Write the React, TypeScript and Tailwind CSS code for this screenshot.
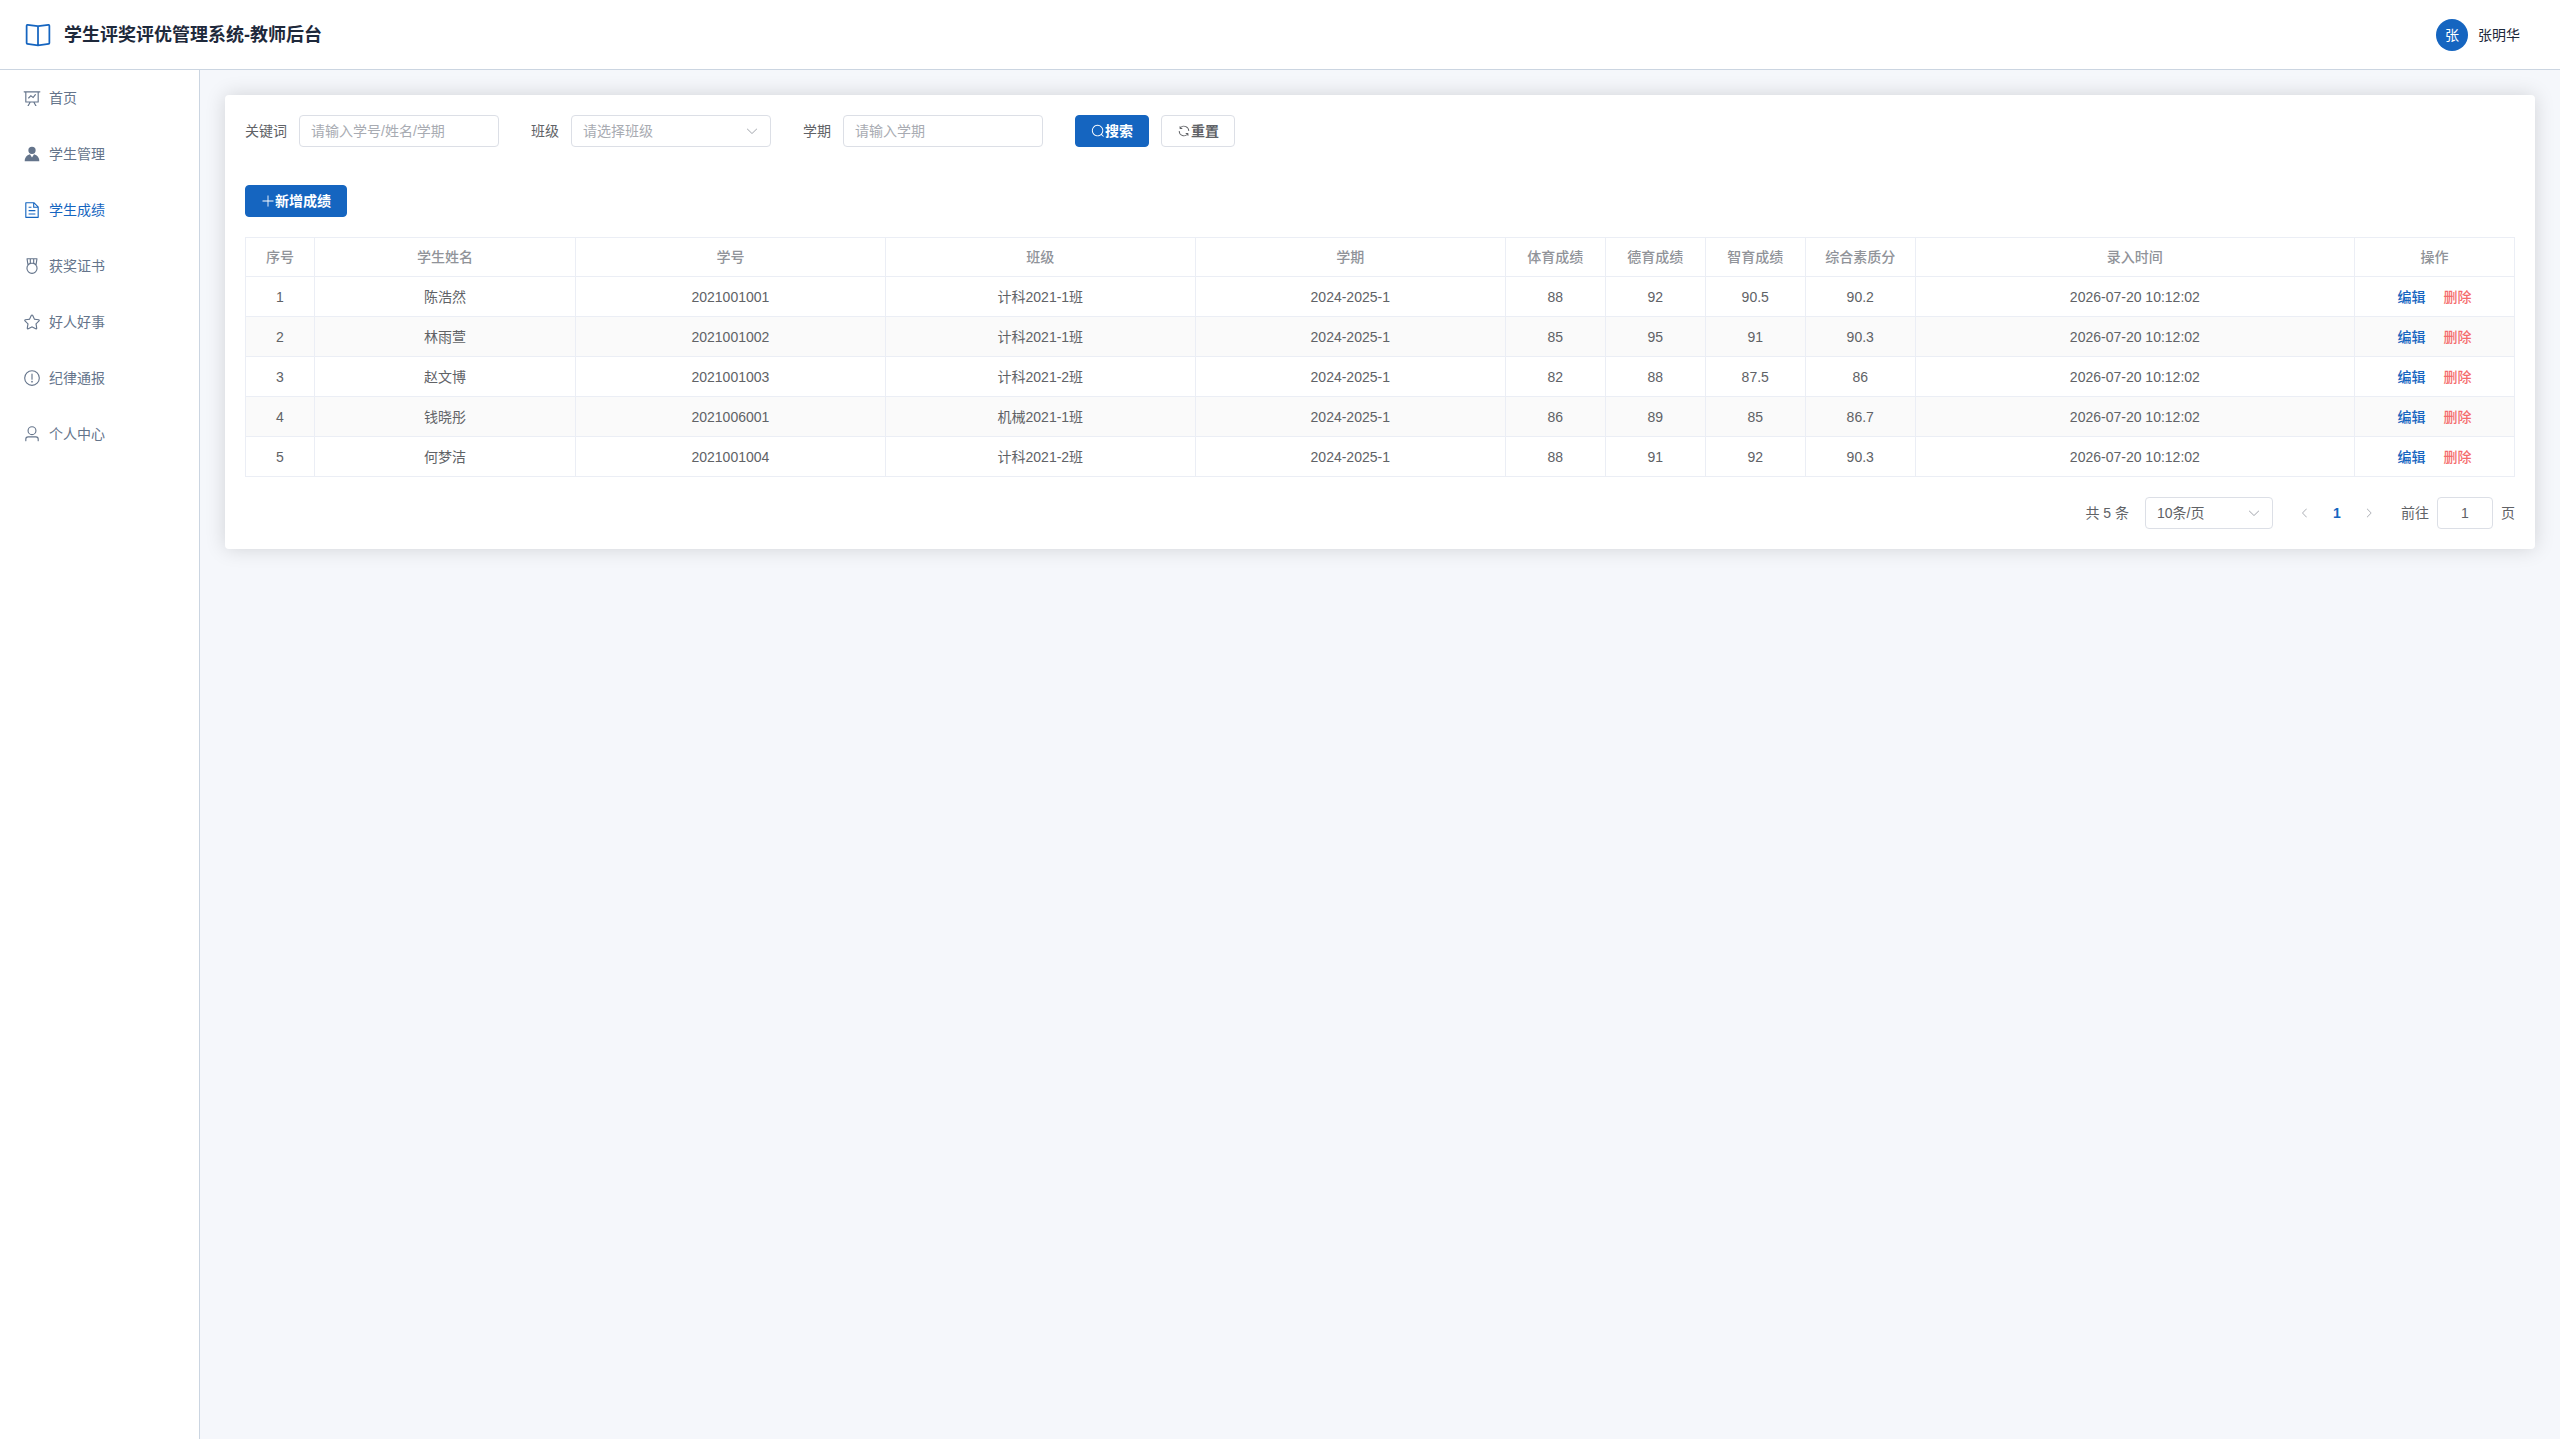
import React, { useState } from 'react';

const ICONS = {
  reading:
    'm512 863.36 384-54.848v-638.72L525.568 222.72a96 96 0 0 1-27.136 0L128 169.792v638.72zM137.024 106.432l370.432 52.928a32 32 0 0 0 9.088 0l370.432-52.928A64 64 0 0 1 960 169.792v638.72a64 64 0 0 1-54.976 63.36l-388.48 55.488a32 32 0 0 1-9.088 0l-388.48-55.488A64 64 0 0 1 64 808.512v-638.72a64 64 0 0 1 73.024-63.36M480 192h64v704h-64z',
  dataLine:
    'M359.168 768H160a32 32 0 0 1-32-32V192H64a32 32 0 0 1 0-64h896a32 32 0 1 1 0 64h-64v544a32 32 0 0 1-32 32H665.216l110.848 192h-73.856L591.36 768H433.024L322.176 960H248.32zM832 192H192v512h640zM342.656 534.656a32 32 0 1 1-45.312-45.312L444.992 341.76l125.44 94.08L679.04 300.032a32 32 0 1 1 49.92 39.936L581.632 524.224 451.008 426.24 342.656 534.592z',
  avatar:
    'M628.736 528.896A416 416 0 0 1 928 928H96a415.872 415.872 0 0 1 299.264-399.104L512 704zM720 304a208 208 0 1 1-416 0 208 208 0 0 1 416 0',
  document:
    'M832 384H576V128H192v768h640zm-26.496-64L640 154.496V320zM160 64h480l256 256v608a32 32 0 0 1-32 32H160a32 32 0 0 1-32-32V96a32 32 0 0 1 32-32m160 448h384v64H320zm0-192h160v64H320zm0 384h384v64H320z',
  medal:
    'M512 896a256 256 0 1 0 0-512 256 256 0 0 0 0 512m0 64a320 320 0 1 1 0-640 320 320 0 0 1 0 640M576 128H448v200a286.72 286.72 0 0 1 64-8c19.52 0 40.832 2.688 64 8zm64 0v219.648c24.448 9.088 50.56 20.416 78.4 33.92L757.44 128zm-256 0H266.624l39.04 253.568c27.84-13.504 53.888-24.832 78.336-33.92V128zM229.312 64h565.376a32 32 0 0 1 31.616 36.864L768 480c-113.792-64-199.104-96-256-96-56.896 0-142.208 32-256 96l-58.304-379.136A32 32 0 0 1 229.312 64',
  star:
    'm512 747.84 228.16 119.936a6.4 6.4 0 0 0 9.28-6.72l-43.52-254.08 184.512-179.904a6.4 6.4 0 0 0-3.52-10.88l-255.104-37.12L517.76 147.904a6.4 6.4 0 0 0-11.52 0L392.192 379.072l-255.104 37.12a6.4 6.4 0 0 0-3.52 10.88L318.08 606.976l-43.584 254.08a6.4 6.4 0 0 0 9.28 6.72zM313.6 924.48a70.4 70.4 0 0 1-102.144-74.24l37.888-220.928L88.96 472.96A70.4 70.4 0 0 1 128 352.896l221.76-32.256 99.2-200.96a70.4 70.4 0 0 1 126.208 0l99.2 200.96 221.824 32.256a70.4 70.4 0 0 1 39.04 120.064L774.72 629.376l37.888 220.928a70.4 70.4 0 0 1-102.144 74.24L512 820.096l-198.4 104.32z',
  warning:
    'M512 64a448 448 0 1 1 0 896 448 448 0 0 1 0-896m0 832a384 384 0 0 0 0-768 384 384 0 0 0 0 768m48-176a48 48 0 1 1-96 0 48 48 0 0 1 96 0m-48-464a32 32 0 0 1 32 32v288a32 32 0 0 1-64 0V288a32 32 0 0 1 32-32',
  user:
    'M512 512a192 192 0 1 0 0-384 192 192 0 0 0 0 384m0 64a256 256 0 1 1 0-512 256 256 0 0 1 0 512m320 320v-96a96 96 0 0 0-96-96H288a96 96 0 0 0-96 96v96a32 32 0 1 1-64 0v-96a160 160 0 0 1 160-160h448a160 160 0 0 1 160 160v96a32 32 0 1 1-64 0',
  search:
    'm795.904 750.72 124.992 124.928a32 32 0 0 1-45.248 45.248L750.656 795.904a416 416 0 1 1 45.248-45.248zM480 832a352 352 0 1 0 0-704 352 352 0 0 0 0 704',
  refresh:
    'M771.776 794.88A384 384 0 0 1 128 512h64a320 320 0 0 0 555.712 216.448H654.72a32 32 0 1 1 0-64h149.056a32 32 0 0 1 32 32v148.928a32 32 0 1 1-64 0v-50.56zM276.288 295.616h92.992a32 32 0 0 1 0 64H220.16a32 32 0 0 1-32-32V178.56a32 32 0 0 1 64 0v50.56A384 384 0 0 1 896.128 512h-64a320 320 0 0 0-555.776-216.384z',
  plus:
    'M480 480V128a32 32 0 0 1 64 0v352h352a32 32 0 1 1 0 64H544v352a32 32 0 1 1-64 0V544H128a32 32 0 0 1 0-64z',
  arrowDown:
    'M831.872 340.864 512 652.672 192.128 340.864a30.592 30.592 0 0 0-42.752 0 29.12 29.12 0 0 0 0 41.6L489.664 714.24a32 32 0 0 0 44.672 0l340.288-331.712a29.12 29.12 0 0 0 0-41.728 30.592 30.592 0 0 0-42.752 0z',
  arrowLeft:
    'M609.408 149.376 277.76 489.6a32 32 0 0 0 0 44.672l331.648 340.352a29.12 29.12 0 0 0 41.728 0 30.592 30.592 0 0 0 0-42.752L339.264 511.936l311.872-319.872a30.592 30.592 0 0 0 0-42.688 29.12 29.12 0 0 0-41.728 0z',
  arrowRight:
    'M340.864 149.312a30.592 30.592 0 0 0 0 42.752L652.736 512 340.864 831.872a30.592 30.592 0 0 0 0 42.752 29.12 29.12 0 0 0 41.728 0L714.24 534.336a32 32 0 0 0 0-44.672L382.592 149.376a29.12 29.12 0 0 0-41.728 0z',
};

type IconName = keyof typeof ICONS;

function Icon({ name, className }: { name: IconName; className: string }) {
  return (
    <svg viewBox="0 0 1024 1024" fill="currentColor" aria-hidden="true" className={className}>
      <path d={ICONS[name]} />
    </svg>
  );
}

const MENU: { icon: IconName; label: string; active?: boolean }[] = [
  { icon: 'dataLine', label: '首页' },
  { icon: 'avatar', label: '学生管理' },
  { icon: 'document', label: '学生成绩', active: true },
  { icon: 'medal', label: '获奖证书' },
  { icon: 'star', label: '好人好事' },
  { icon: 'warning', label: '纪律通报' },
  { icon: 'user', label: '个人中心' },
];

const COLUMNS = [
  { label: '序号', width: 'w-[69px]' },
  { label: '学生姓名', width: 'w-[11.5%]' },
  { label: '学号', width: 'w-[13.66%]' },
  { label: '班级', width: 'w-[13.66%]' },
  { label: '学期', width: 'w-[13.66%]' },
  { label: '体育成绩', width: 'w-[100px]' },
  { label: '德育成绩', width: 'w-[100px]' },
  { label: '智育成绩', width: 'w-[100px]' },
  { label: '综合素质分', width: 'w-[110px]' },
  { label: '录入时间', width: '' },
  { label: '操作', width: 'w-[160px]' },
];

const ROWS = [
  ['1', '陈浩然', '2021001001', '计科2021-1班', '2024-2025-1', '88', '92', '90.5', '90.2', '2026-07-20 10:12:02'],
  ['2', '林雨萱', '2021001002', '计科2021-1班', '2024-2025-1', '85', '95', '91', '90.3', '2026-07-20 10:12:02'],
  ['3', '赵文博', '2021001003', '计科2021-2班', '2024-2025-1', '82', '88', '87.5', '86', '2026-07-20 10:12:02'],
  ['4', '钱晓彤', '2021006001', '机械2021-1班', '2024-2025-1', '86', '89', '85', '86.7', '2026-07-20 10:12:02'],
  ['5', '何梦洁', '2021001004', '计科2021-2班', '2024-2025-1', '88', '91', '92', '90.3', '2026-07-20 10:12:02'],
];

const FIELD =
  'h-8 rounded border border-[#dcdfe6] bg-white px-[11px] text-sm outline-none placeholder:text-[#a8abb2] focus:border-[#1565c0]';

function Header() {
  return (
    <header className="flex h-[70px] items-center justify-between border-b border-[#cbd5e1] bg-white pr-10 pl-6">
      <div className="flex items-center gap-3">
        <Icon name="reading" className="size-7 text-[#1565c0]" />
        <h1 className="text-lg font-bold text-[#1e293b]">学生评奖评优管理系统-教师后台</h1>
      </div>
      <div className="flex items-center gap-2.5">
        <span className="flex size-8 items-center justify-center rounded-full bg-[#1565c0] text-sm text-white">
          张
        </span>
        <span className="text-sm text-[#1e293b]">张明华</span>
      </div>
    </header>
  );
}

function Sidebar() {
  return (
    <nav className="w-[200px] shrink-0 border-r border-[#cbd5e1] bg-white">
      {MENU.map((item) => (
        <a
          key={item.label}
          href="#"
          className={`flex h-14 items-center gap-2 pl-[23px] text-sm ${
            item.active ? 'text-[#1565c0]' : 'text-[#64748b]'
          }`}
        >
          <Icon name={item.icon} className="size-[18px]" />
          {item.label}
        </a>
      ))}
    </nav>
  );
}

function SearchForm() {
  const [keyword, setKeyword] = useState('');
  const [term, setTerm] = useState('');
  return (
    <form className="flex flex-wrap items-center gap-8" onSubmit={(e) => e.preventDefault()}>
      <div className="flex items-center gap-3">
        <label htmlFor="keyword">关键词</label>
        <input
          id="keyword"
          className={`${FIELD} w-[200px]`}
          placeholder="请输入学号/姓名/学期"
          value={keyword}
          onChange={(e) => setKeyword(e.target.value)}
        />
      </div>
      <div className="flex items-center gap-3">
        <label htmlFor="class">班级</label>
        <div className="relative">
          <select id="class" defaultValue="" className={`${FIELD} w-[200px] appearance-none text-[#a8abb2]`}>
            <option value="">请选择班级</option>
            <option>计科2021-1班</option>
            <option>计科2021-2班</option>
            <option>机械2021-1班</option>
          </select>
          <Icon name="arrowDown" className="pointer-events-none absolute top-[9px] right-3 size-3.5 text-[#a8abb2]" />
        </div>
      </div>
      <div className="flex items-center gap-3">
        <label htmlFor="term">学期</label>
        <input
          id="term"
          className={`${FIELD} w-[200px]`}
          placeholder="请输入学期"
          value={term}
          onChange={(e) => setTerm(e.target.value)}
        />
      </div>
      <div className="flex items-center gap-3">
        <button
          type="submit"
          className="flex h-8 items-center rounded border border-[#1565c0] bg-[#1565c0] px-[15px] font-bold text-white"
        >
          <Icon name="search" className="size-3.5" />
          搜索
        </button>
        <button
          type="reset"
          className="flex h-8 items-center rounded border border-[#dcdfe6] bg-white px-[15px] font-bold"
        >
          <Icon name="refresh" className="size-3.5" />
          重置
        </button>
      </div>
    </form>
  );
}

function ScoreTable() {
  return (
    <table className="mt-5 w-full table-fixed border-separate border-spacing-0 border-t border-l border-[#ebeef5] text-center">
      <colgroup>
        {COLUMNS.map((c) => (
          <col key={c.label} className={c.width} />
        ))}
      </colgroup>
      <thead>
        <tr className="h-[39px] text-[#909399]">
          {COLUMNS.map((c) => (
            <th key={c.label} scope="col" className="border-r border-b border-[#ebeef5] font-medium">
              {c.label}
            </th>
          ))}
        </tr>
      </thead>
      <tbody>
        {ROWS.map((row) => (
          <tr key={row[0]} className="h-10 even:bg-[#fafafa]">
            {row.map((cell, i) => (
              <td key={i} className="border-r border-b border-[#ebeef5]">
                {cell}
              </td>
            ))}
            <td className="border-r border-b border-[#ebeef5]">
              <div className="flex items-center justify-center gap-[18px] font-medium">
                <button type="button" className="text-[#1565c0]">
                  编辑
                </button>
                <button type="button" className="text-[#f56c6c]">
                  删除
                </button>
              </div>
            </td>
          </tr>
        ))}
      </tbody>
    </table>
  );
}

function Pagination() {
  const [page, setPage] = useState('1');
  return (
    <div className="mt-5 flex items-center justify-end gap-4">
      <span>共 5 条</span>
      <div className="relative">
        <select aria-label="每页条数" defaultValue="10" className={`${FIELD} w-32 appearance-none`}>
          <option value="10">10条/页</option>
          <option value="20">20条/页</option>
          <option value="50">50条/页</option>
        </select>
        <Icon name="arrowDown" className="pointer-events-none absolute top-[9px] right-3 size-3.5 text-[#a8abb2]" />
      </div>
      <div className="flex">
        <button type="button" aria-label="上一页" disabled className="flex size-8 items-center justify-center text-[#a8abb2]">
          <Icon name="arrowLeft" className="size-3" />
        </button>
        <button type="button" aria-current="page" className="size-8 font-bold text-[#1565c0]">
          1
        </button>
        <button type="button" aria-label="下一页" disabled className="flex size-8 items-center justify-center text-[#a8abb2]">
          <Icon name="arrowRight" className="size-3" />
        </button>
      </div>
      <div className="flex items-center gap-2">
        <label htmlFor="goto">前往</label>
        <input
          id="goto"
          className={`${FIELD} w-14 text-center`}
          value={page}
          onChange={(e) => setPage(e.target.value)}
        />
        <span>页</span>
      </div>
    </div>
  );
}

export default function App() {
  return (
    <div className="flex min-h-screen flex-col bg-[#f5f7fb] font-['Liberation_Sans','Noto_Sans_CJK_SC',sans-serif] text-sm text-[#606266]">
      <Header />
      <div className="flex flex-1">
        <Sidebar />
        <main className="min-w-0 flex-1 p-[25px]">
          <section className="rounded bg-white p-5 shadow-[0_0_20px_rgba(0,0,0,0.15)]">
            <SearchForm />
            <button
              type="button"
              className="mt-[38px] flex h-8 items-center rounded border border-[#1565c0] bg-[#1565c0] px-[15px] font-bold text-white"
            >
              <Icon name="plus" className="size-3.5" />
              新增成绩
            </button>
            <ScoreTable />
            <Pagination />
          </section>
        </main>
      </div>
    </div>
  );
}
